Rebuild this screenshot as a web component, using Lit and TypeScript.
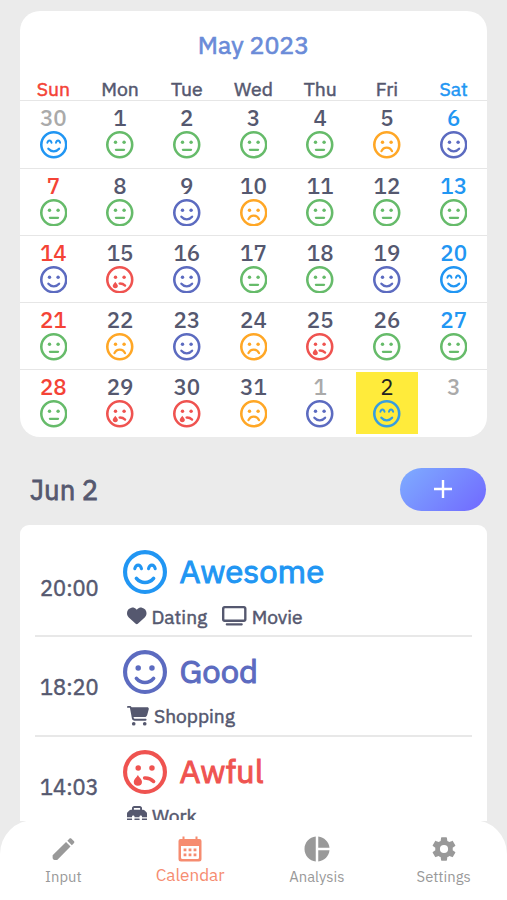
import { LitElement, html, svg, css } from "lit";
import { customElement, property } from "lit/decorators.js";
import { classMap } from "lit/directives/class-map.js";

type Mood = "awesome" | "good" | "okay" | "bad" | "awful";

const dots = svg`<circle class="fill" cx="177" cy="208" r="32"/><circle class="fill" cx="337" cy="208" r="32"/>`;
const smile = svg`<path d="M156 330C178 357 212 378 256 378s78-21 100-48"/>`;
const mouths = {
  awesome: svg`<path class="eye" d="M137 218C144 190 156 176 176 176s32 14 39 42M297 218C304 190 316 176 336 176s32 14 39 42"/>${smile}`,
  good: svg`${dots}${smile}`,
  okay: svg`${dots}<path d="M184 350H336"/>`,
  bad: svg`${dots}<path d="M158 376C174 336 210 308 256 308s82 28 98 68"/>`,
  awful: svg`${dots}<path d="M252 326C292 324 330 340 356 366"/><path class="fill" d="M173 292C160 317 125 344 125 370a48 46 0 0 0 96 0C221 344 186 317 173 292z"/>`,
};

@customElement("mood-face")
class MoodFace extends LitElement {
  @property() mood: Mood = "okay";
  static styles = css`
    :host { display: block; width: 27.500px; height: 27.500px; flex: none; }
    svg { display: block; width: 100%; height: 100%; fill: none; stroke-width: 42; stroke-linecap: round; }
    .ring { stroke-width: 48; }
    .eye { stroke-width: 36; }
    .fill { stroke: none; }
    .awesome { stroke: #2196f3; } .awesome .fill { fill: #2196f3; }
    .good { stroke: #5c6bc0; } .good .fill { fill: #5c6bc0; }
    .okay { stroke: #66bb6a; } .okay .fill { fill: #66bb6a; }
    .bad { stroke: #ffa726; } .bad .fill { fill: #ffa726; }
    .awful { stroke: #ef5350; } .awful .fill { fill: #ef5350; }
  `;
  render() {
    return html`<svg class=${this.mood} viewBox="0 0 512 512"><circle class="ring" cx="256" cy="256" r="232"/>${mouths[this.mood]}</svg>`;
  }
}

const icons = {
  heart: svg`<svg class="glyph" width="19.500" height="19.500" viewBox="0 0 512 512"><path d="M47.6 300.4L228.3 469.1c7.5 7 17.4 10.9 27.7 10.9s20.2-3.9 27.7-10.9L464.4 300.4c30.4-28.3 47.6-68 47.6-109.5v-5.8c0-69.9-50.5-129.5-119.4-141C347 36.500 300.600 51.400 268 84L256 96 244 84c-32.600-32.600-79-47.500-124.600-39.900C50.500 55.600 0 115.200 0 185.100v5.800c0 41.500 17.200 81.200 47.600 109.500z"/></svg>`,
  tv: svg`<svg class="glyph" width="24.500" height="19.600" viewBox="0 0 640 512"><path fill-rule="evenodd" d="M76 62Q62 62 62 76V340Q62 354 76 354H564Q578 354 578 340V76Q578 62 564 62zM0 64C0 28.700 28.700 0 64 0h512c35.300 0 64 28.700 64 64v288c0 35.300-28.700 64-64 64H64c-35.300 0-64-28.700-64-64V64zM128 448h384c17.700 0 32 14.300 32 32s-14.300 32-32 32H128c-17.700 0-32-14.300-32-32s14.300-32 32-32z"/></svg>`,
  cart: svg`<svg class="glyph" width="22" height="19.600" viewBox="0 0 576 512"><path d="M0 24C0 10.700 10.700 0 24 0h45.500c22 0 41.500 12.800 50.600 32h411c26.300 0 45.500 25 38.600 50.400l-41 152.300c-8.500 31.400-37 53.300-69.500 53.300H170.700l5.400 28.500c2.200 11.300 12.100 19.500 23.600 19.500H488c13.300 0 24 10.700 24 24s-10.700 24-24 24H199.700c-34.600 0-64.300-24.600-70.700-58.500L77.400 54.500c-.7-3.800-4-6.500-7.900-6.500H24C10.700 48 0 37.300 0 24zM128 464a48 48 0 1 1 96 0 48 48 0 1 1-96 0zm336-48a48 48 0 1 1 0 96 48 48 0 1 1 0-96z"/></svg>`,
  briefcase: svg`<svg class="glyph" width="20" height="20" viewBox="0 0 512 512"><path d="M176 56v40h160V56c0-4.400-3.600-8-8-8H184c-4.400 0-8 3.600-8 8zm-48 40V56c0-30.900 25.100-56 56-56h144c30.900 0 56 25.100 56 56v40h28.100c12.700 0 24.900 5.100 33.900 14.100l51.900 51.900c9 9 14.100 21.200 14.100 33.900V288H384v-16c0-17.700-14.300-32-32-32s-32 14.300-32 32v16H192v-16c0-17.700-14.300-32-32-32s-32 14.300-32 32v16H0V195.900c0-12.700 5.100-24.900 14.100-33.900L66 110.100c9-9 21.200-14.100 33.900-14.100H128zM0 416v-96h128v16c0 17.700 14.300 32 32 32s32-14.300 32-32v-16h128v16c0 17.700 14.300 32 32 32s32-14.300 32-32v-16h128v96c0 35.300-28.700 64-64 64H64c-35.300 0-64-28.700-64-64z"/></svg>`,
  pencil: svg`<svg class="glyph" width="29" height="29" viewBox="0 0 24 24"><path d="M20.700 7C21.100 6.600 21.100 6 20.700 5.600L18.400 3.300C18 2.900 17.400 2.900 17 3.300L15.200 5.100 18.900 8.800M3 17.200V19.500Q3 21 4.500 21H6.800L17.800 9.900 14.100 6.200 3 17.200Z"/></svg>`,
  calendar: svg`<svg class="glyph" width="28" height="28" viewBox="0 0 28 28"><path fill-rule="evenodd" d="M6.500 1.500h2V4h11V1.500h2V4h2Q25.500 4 25.500 6V24Q25.500 26.500 23 26.500H5Q2.500 26.500 2.500 24V6Q2.500 4 4.500 4H6.500zM5 11v11.500Q5 24 6.500 24h15Q23 24 23 22.500V11zM7.600 13.500h2.800v2.800h-2.800zM12.600 13.500h2.800v2.800h-2.800zM17.600 13.500h2.800v2.800h-2.800zM7.600 18.500h2.800v2.800h-2.800zM12.600 18.500h2.800v2.800h-2.800zM17.600 18.500h2.800v2.800h-2.800z"/></svg>`,
  pie: svg`<svg class="glyph" width="30" height="30" viewBox="0 0 24 24"><path d="M11 2v20c-5.070-.5-9-4.790-9-10s3.930-9.500 9-10m2 0v9h9c-.47-4.740-4.240-8.500-9-9m0 11v9c4.740-.47 8.500-4.250 9-9h-9z"/></svg>`,
  gear: svg`<svg class="glyph" width="28" height="28" viewBox="0 0 24 24"><path d="M12 15.500A3.500 3.500 0 0 1 8.500 12 3.500 3.500 0 0 1 12 8.500a3.500 3.500 0 0 1 3.500 3.500 3.500 3.500 0 0 1-3.500 3.500m7.430-2.530c.04-.32.07-.64.07-.97s-.03-.66-.07-1l2.110-1.630c.19-.15.24-.42.12-.64l-2-3.460c-.12-.22-.39-.31-.61-.22l-2.490 1c-.52-.39-1.060-.73-1.690-.98l-.37-2.650A.506.506 0 0 0 14 2h-4c-.25 0-.46.18-.5.42l-.37 2.650c-.63.25-1.170.59-1.690.98l-2.490-1c-.22-.09-.49 0-.61.22l-2 3.460c-.13.22-.07.49.12.64L4.570 11c-.04.34-.07.67-.07 1s.03.65.07.97l-2.110 1.660c-.19.15-.25.42-.12.640l2 3.460c.12.22.39.3.61.22l2.490-1.010c.52.4 1.060.74 1.690.99l.37 2.650c.04.24.25.42.5.42h4c.25 0 .46-.18.5-.42l.37-2.650c.63-.26 1.170-.59 1.690-.99l2.490 1.010c.22.080.49 0 .61-.22l2-3.460c.12-.22.070-.49-.12-.64z"/></svg>`,
};

const weekdays = ["Sun", "Mon", "Tue", "Wed", "Thu", "Fri", "Sat"];
const moods: (Mood | null)[] = [
  "awesome", "okay", "okay", "okay", "okay", "bad", "good",
  "okay", "okay", "good", "bad", "okay", "okay", "okay",
  "good", "awful", "good", "okay", "okay", "good", "awesome",
  "okay", "bad", "good", "bad", "awful", "okay", "okay",
  "okay", "awful", "awful", "bad", "good", "awesome", null,
];
const days = moods.map((mood, i) => ({
  mood,
  day: i === 0 ? 30 : i > 31 ? i - 31 : i,
  outside: i === 0 || i > 31,
  selected: i === 33,
}));

const entries = [
  { time: "20:00", mood: "awesome" as Mood, label: "Awesome", tags: [{ icon: icons.heart, text: "Dating" }, { icon: icons.tv, text: "Movie" }] },
  { time: "18:20", mood: "good" as Mood, label: "Good", tags: [{ icon: icons.cart, text: "Shopping" }] },
  { time: "14:03", mood: "awful" as Mood, label: "Awful", tags: [{ icon: icons.briefcase, text: "Work" }] },
];

const tabs = [
  { icon: icons.pencil, text: "Input" },
  { icon: icons.calendar, text: "Calendar", active: true },
  { icon: icons.pie, text: "Analysis" },
  { icon: icons.gear, text: "Settings" },
];

@customElement("app-root")
class AppRoot extends LitElement {
  static styles = css`
    :host {
      display: flex; flex-direction: column; height: 900px; overflow: hidden; box-sizing: border-box;
      background: #ebebeb; color: #55586f;
      font-family: "IBM Plex Sans", Roboto, sans-serif; font-weight: 500;
    }
    .glyph { display: block; fill: currentColor; flex: none; }
    .scroll { height: 821px; flex: none; overflow: hidden; padding: 11px 20px 0; box-sizing: border-box; }
    .calendar { background: #fff; border-radius: 20px; height: 426px; box-sizing: border-box; overflow: hidden; }
    .month, .weekday, .date, .label, .tag, .time { font-weight: 400; -webkit-text-stroke: .5px currentColor; }
    .date { -webkit-text-stroke-width: .8px; }
    .label { -webkit-text-stroke-width: 1px; }
    .month { height: 68px; line-height: 68px; text-align: center; font-size: 24.900px; color: #6a8bd8; -webkit-text-stroke-width: .7px; }
    .grid { display: grid; grid-template-columns: repeat(7, 1fr); }
    .weekday { height: 21.400px; line-height: 20px; text-align: center; font-size: 19.400px; }
    .day { height: 67.250px; box-sizing: border-box; border-top: 1px solid #e6e6e6; padding: 2px; }
    .cell { height: 62px; display: flex; flex-direction: column; align-items: center; }
    .num { font-size: 22.300px; line-height: 29.500px; height: 28px; }
    .sun { color: #f44336; } .sat { color: #2196f3; }
    .outside { color: #aaa; }
    .selected { background: #ffeb3b; color: #222; font-weight: 400; }
    .selected mood-face { opacity: .9; }
    .bar { display: flex; justify-content: space-between; align-items: center; margin: 31px 1px 15px 10px; height: 42px; }
    .date { font-size: 27.500px; line-height: 40px; margin-top: 2px; }
    .add { width: 86px; height: 43px; border: 0; padding: 0; border-radius: 22px; display: grid; place-items: center; background: linear-gradient(135deg, #7da6ff 10%, #726fff 90%); }
    .add svg { stroke: #fff; stroke-width: 2.400; display: block; }
    .entries { background: #fff; border-radius: 9px 9px 0 0; padding: 12.500px 15px 0; height: 400px; box-sizing: border-box; }
    .entry { height: 99.800px; box-sizing: border-box; border-bottom: 2px solid #e8e8e8; display: flex; }
    .time { width: 87.500px; padding-left: 5px; box-sizing: border-box; line-height: 100px; font-size: 21.800px; }
    .detail { padding-top: 12.500px; }
    .headline { display: flex; align-items: center; gap: 13px; height: 44px; font-size: 32.800px; }
    .headline mood-face { width: 44px; height: 44px; }
    .label { line-height: 40px; margin-top: -2px; }
    .awesome { color: #2196f3; } .good { color: #5c6bc0; } .awful { color: #ef5350; }
    .tags { display: flex; gap: 15px; padding: 10.500px 0 0 4.500px; }
    .tag { display: flex; align-items: center; gap: 5px; font-size: 19.200px; line-height: 23px; }
    .nav { height: 80px; margin-top: -1px; flex: none; background: #fff; border-radius: 34px 34px 0 0; display: grid; grid-template-columns: repeat(4, 1fr); }
    .tab { display: flex; flex-direction: column; align-items: center; padding-top: 14px; color: #999; font-size: 14.800px; font-weight: 400; }
    .tab .glyph { height: 30px; }
    .tab .name { line-height: 26px; }
    .active { color: #f68c70; font-size: 17.100px; }
    .active .name { line-height: 22px; }
  `;
  render() {
    return html`
      <div class="scroll">
        <div class="calendar">
          <div class="month">May 2023</div>
          <div class="grid">
            ${weekdays.map((d, i) => html`<div class=${classMap({ weekday: true, sun: i === 0, sat: i === 6 })}>${d}</div>`)}
            ${days.map((d, i) => html`<div class="day"><div class=${classMap({ cell: true, sun: i % 7 === 0 && !d.outside, sat: i % 7 === 6 && !d.outside, outside: d.outside && !d.selected, selected: d.selected })}>
              <div class="num">${d.day}</div>${d.mood ? html`<mood-face .mood=${d.mood}></mood-face>` : null}
            </div></div>`)}
          </div>
        </div>
        <div class="bar">
          <div class="date">Jun 2</div>
          <button class="add" aria-label="Add"><svg width="18" height="18" viewBox="0 0 18 18"><path d="M9 0V18M0 9H18"/></svg></button>
        </div>
        <div class="entries">
          ${entries.map((e) => html`<div class="entry">
            <div class="time">${e.time}</div>
            <div class="detail">
              <div class="headline ${e.mood}"><mood-face .mood=${e.mood}></mood-face><span class="label">${e.label}</span></div>
              <div class="tags">${e.tags.map((t) => html`<div class="tag">${t.icon}<span>${t.text}</span></div>`)}</div>
            </div>
          </div>`)}
        </div>
      </div>
      <nav class="nav">
        ${tabs.map((t) => html`<div class=${classMap({ tab: true, active: !!t.active })}>${t.icon}<span class="name">${t.text}</span></div>`)}
      </nav>
    `;
  }
}
